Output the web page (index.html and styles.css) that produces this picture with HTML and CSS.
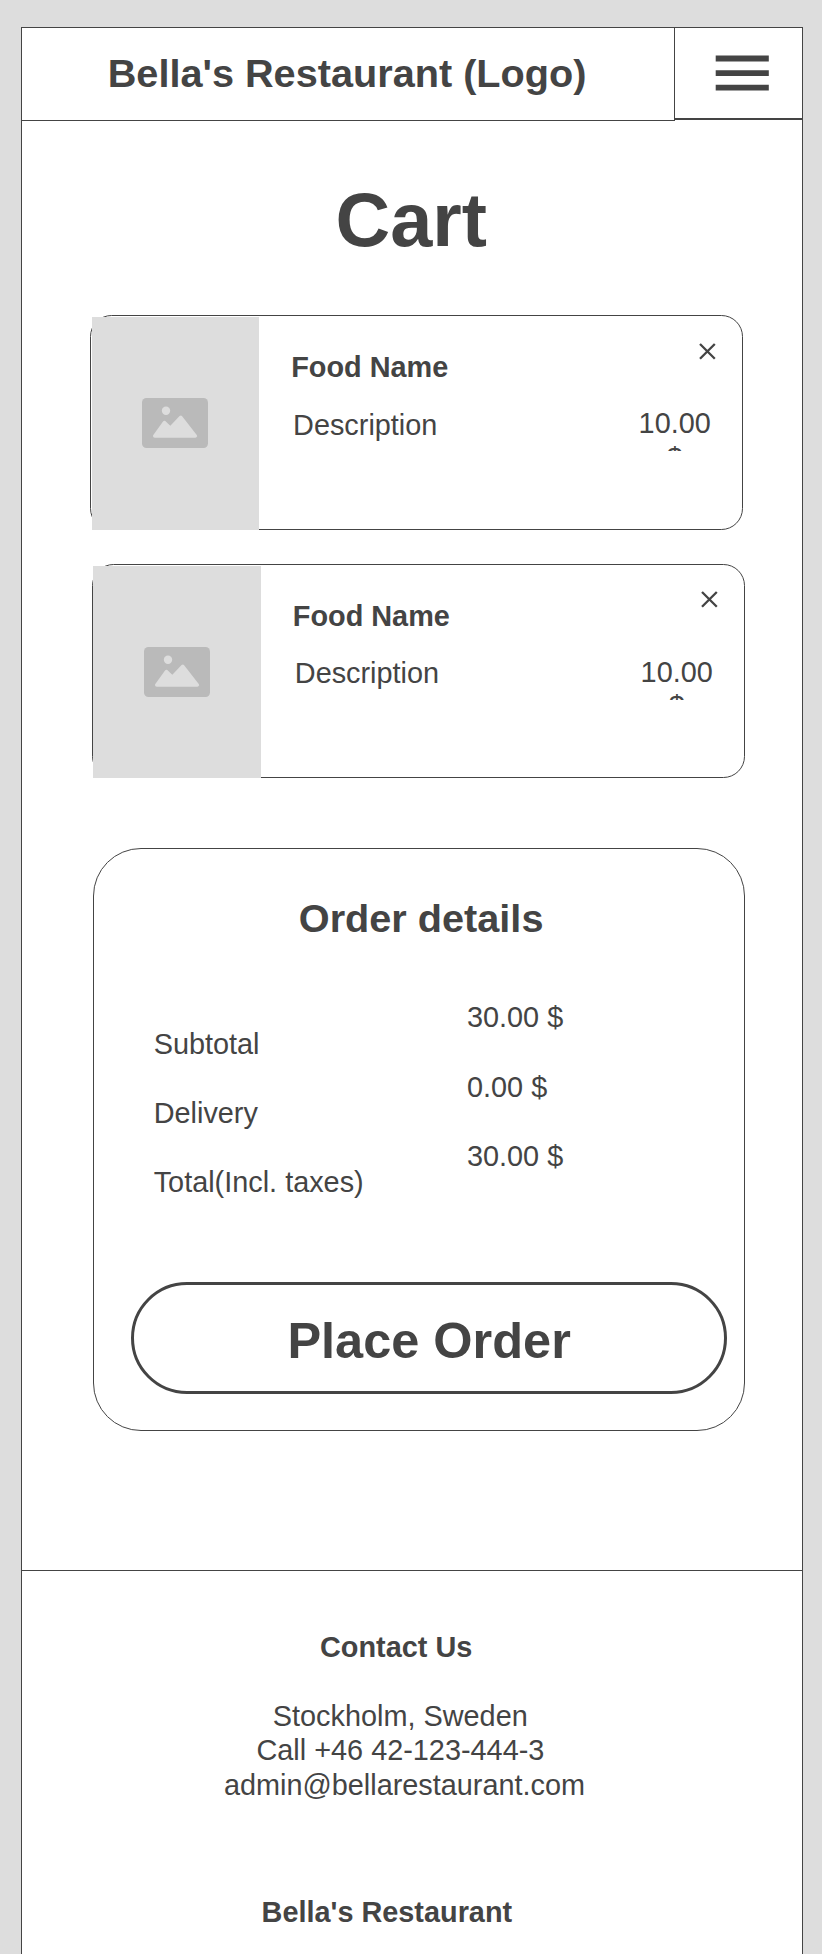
FILE: index.html
```html
<!DOCTYPE html>
<html lang="en">
<head>
<meta charset="utf-8">
<title>Cart - Bella's Restaurant</title>
<link rel="stylesheet" href="styles.css">
</head>
<body>
<svg class="defs" width="0" height="0" aria-hidden="true">
  <symbol id="picture" viewBox="0 0 66 50">
    <rect width="66" height="50" rx="4.5" fill="#bababa"/>
    <circle cx="24" cy="12.7" r="4.2" fill="#ddd"/>
    <path d="M12.7 38 22.4 24.5 28.4 30.2 38.8 19.2 53.4 38Z" fill="#ddd" stroke="#ddd" stroke-width="3.4" stroke-linejoin="round"/>
  </symbol>
  <symbol id="cross" viewBox="0 0 17 17">
    <path d="M1 1 15.8 15.8M15.8 1 1 15.8" fill="none" stroke="#444" stroke-width="2.3"/>
  </symbol>
</svg>
<div class="frame">
  <header class="header">
    <div class="logo">Bella's Restaurant (Logo)</div>
    <div class="menu">
      <svg width="54" height="38" viewBox="0 0 54 38"><path d="M.7 1.6H53.8V7.5H.7ZM.7 16.2H53.8V21.9H.7ZM.7 30.8H53.8V36.6H.7Z" fill="#444"/></svg>
    </div>
  </header>
  <main>
    <h1 class="title">Cart</h1>
    <article class="item item-first">
      <div class="thumb"><svg width="66" height="50"><use href="#picture"/></svg></div>
      <div class="info">
        <h2 class="name">Food Name</h2>
        <p class="description">Description</p>
      </div>
      <div class="side">
        <svg class="remove" width="17" height="17"><use href="#cross"/></svg>
        <div class="price">10.00 $</div>
      </div>
    </article>
    <article class="item item-second">
      <div class="thumb"><svg width="66" height="50"><use href="#picture"/></svg></div>
      <div class="info">
        <h2 class="name">Food Name</h2>
        <p class="description">Description</p>
      </div>
      <div class="side">
        <svg class="remove" width="17" height="17"><use href="#cross"/></svg>
        <div class="price">10.00 $</div>
      </div>
    </article>
    <section class="order">
      <h2 class="order-title">Order details</h2>
      <div class="summary">
        <div class="labels"><span>Subtotal</span><span>Delivery</span><span>Total(Incl. taxes)</span></div>
        <div class="amounts"><span>30.00 $</span><span>0.00 $</span><span>30.00 $</span></div>
      </div>
      <div class="place-order">Place Order</div>
    </section>
  </main>
  <footer class="footer">
    <h3 class="contact-title">Contact Us</h3>
    <p class="city">Stockholm, Sweden</p>
    <p class="phone">Call +46 42-123-444-3</p>
    <p class="email">admin@bellarestaurant.com</p>
    <h3 class="brand">Bella's Restaurant</h3>
  </footer>
</div>
</body>
</html>
```

FILE: styles.css
```css
* { box-sizing: border-box; margin: 0; padding: 0; }

body {
  height: 1954px;
  overflow: hidden;
  padding: 27px 0 0 21px;
  background: #ddd;
  color: #444;
  font: 28.85px/34px "Liberation Sans", Arial, sans-serif;
}

svg { display: block; flex: none; }
.defs { display: none; }

.frame {
  width: 782px;
  height: 1990px;
  border: 1px solid #444;
  background: #fff;
}

.header { display: flex; align-items: flex-start; height: 93px; }
.logo {
  width: 653px;
  height: 93px;
  padding: 23px 0 0 85.7px;
  border-right: 1px solid #444;
  border-bottom: 1px solid #444;
  font-size: 39.67px;
  font-weight: bold;
  line-height: 44px;
  white-space: nowrap;
}
.menu {
  width: 127px;
  height: 92px;
  padding: 26px 0 0 40px;
  border-bottom: 2px solid #444;
}

.title {
  margin-top: 56px;
  padding-left: 313.6px;
  font-size: 75.7px;
  line-height: 85px;
}

.item {
  display: flex;
  align-items: flex-start;
  width: 653px;
  border: 1px solid #444;
  border-radius: 21.6px;
}
.item-first { height: 215px; margin: 53px 0 0 68px; }
.item-second { height: 214px; margin: 34px 0 0 70px; }

.thumb { flex: none; margin-top: 1px; background: #ddd; }
.item-first .thumb { width: 167px; height: 213px; margin-left: 1px; padding: 81px 0 0 50px; }
.item-second .thumb { width: 168px; height: 212px; padding: 81px 0 0 51px; }

.info { width: 373px; padding: 34px 0 0 32.2px; }
.item-second .info { padding-left: 31.8px; }
.name { font-size: 28.85px; }
.description { margin-top: 24px; padding-left: 1.9px; }
.item-second .description { margin-top: 23px; padding-left: 2px; }

.side { width: 84.4px; padding-top: 27px; text-align: center; }
.item-second .side { padding-top: 26px; }
.remove { margin-left: auto; }
.price {
  height: 45px;
  margin-top: 46px;
  padding-left: 1px;
  overflow: hidden;
  line-height: 35px;
}
.item-second .price { margin-top: 47px; line-height: 34px; }

.order {
  width: 652px;
  height: 583px;
  margin: 70px 0 0 71px;
  padding-top: 47px;
  border: 1px solid #444;
  border-radius: 48px;
}
.order-title {
  padding-left: 204.8px;
  font-size: 39.67px;
  line-height: 44px;
}
.summary {
  display: flex;
  height: 282px;
  margin-top: 60px;
  padding-left: 59.7px;
  line-height: 34.6px;
}
.labels, .amounts { display: flex; flex-direction: column; gap: 34.6px; }
.labels { width: 313.3px; padding-top: 26.6px; }
.amounts { padding-top: .4px; }

.place-order {
  width: 596px;
  height: 112px;
  margin-left: 37px;
  padding: 27px 0 0 153.4px;
  border: 3px solid #444;
  border-radius: 56px;
  font-size: 50.49px;
  font-weight: bold;
  line-height: 57px;
}

.footer {
  margin-top: 139px;
  padding-top: 59px;
  border-top: 1px solid #444;
  line-height: 34.6px;
}
.contact-title { padding-left: 298px; font-size: 28.85px; }
.city { margin-top: 34px; padding-left: 250.8px; }
.phone { padding-left: 234.5px; }
.email { padding-left: 201.9px; }
.brand { margin-top: 92.8px; padding-left: 239.6px; font-size: 28.85px; }
```
